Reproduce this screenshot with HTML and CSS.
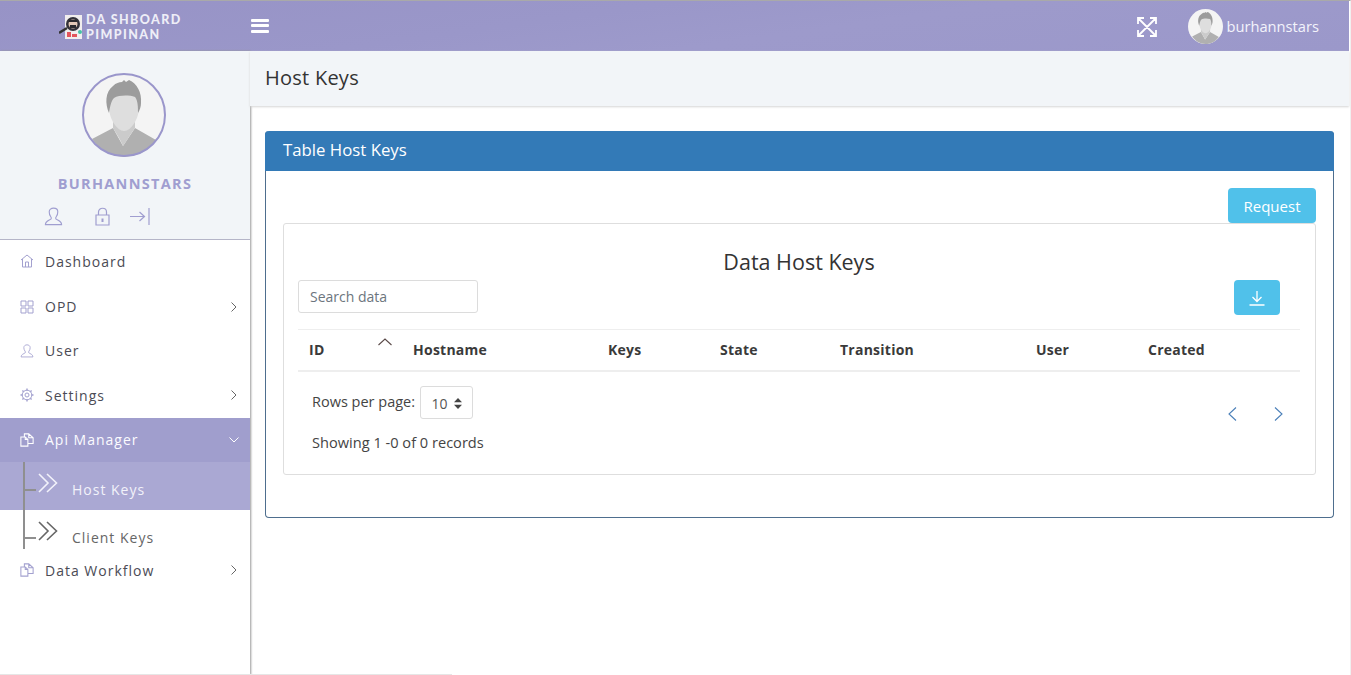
FILE: index.html
```html
<!DOCTYPE html>
<html lang="id">
<head>
<meta charset="utf-8">
<title>Host Keys</title>
<link rel="stylesheet" href="styles.css">
</head>
<body>
<svg class="defs" width="0" height="0" aria-hidden="true">
  <defs>
    <symbol id="person" viewBox="0 0 84 84">
      <circle cx="42" cy="42" r="42" fill="#f4f4f4"/>
      <path d="M10 66 L31 55 L41 73 L53 55 L74 67 C66 78 55 84 42 84 C29 84 18 77 10 66Z" fill="#b0b0b0"/>
      <path d="M31 44 H53 V55 C49 60 46 66 41 73 C38 66 34 60 31 55Z" fill="#cbcbcb"/>
      <path d="M27 34 C27 24 34 20 42 20 C50 20 57 24 57 34 C57 46 49 58 42 58 C35 58 27 46 27 34Z" fill="#dedede"/>
      <path d="M27 40 C23 31 23 19 31 13 C34 10 37 9 40 9 L42 7 L44 9 L47 7 C55 10 60 20 59 30 C59 33 58 37 56 40 C56 34 56 28 53 24 C47 22 37 22 32 25 C29 28 28 34 27 40Z" fill="#9c9c9c"/>
    </symbol>
    <symbol id="i-user" viewBox="0 0 20 20">
      <path d="M1.500 18.500 C1.500 14.500 6 14 7.500 12.500 C8 11.500 7.800 11 7 10 C5.800 8.500 5.500 6.500 5.500 5 C5.500 2.800 7.500 1.200 10 1.200 C12.500 1.200 14.500 2.800 14.500 5 C14.500 6.500 14.200 8.500 13 10 C12.200 11 12 11.500 12.500 12.500 C14 14 18.500 14.500 18.500 18.500Z" fill="none" stroke="currentColor" stroke-width="1.200"/>
    </symbol>
    <symbol id="i-copy" viewBox="0 0 16 16">
      <path d="M1 4.500 H6 L9 7.500 V15 H1Z M6 4.500 V7.500 H9 M5 4.500 V1 H10 L15 5.500 V12 H9 M10 1 V5.500 H15" fill="none" stroke="currentColor" stroke-width="1.200"/>
    </symbol>
    <symbol id="i-chev" viewBox="0 0 10 14">
      <path d="M2.500 2.500 L7 7 L2.500 11.500" fill="none" stroke="currentColor" stroke-width="1"/>
    </symbol>
    <symbol id="i-dbl" viewBox="0 0 20 20">
      <path d="M1 1 L10 10 L1 19 M9 1 L18.500 10 L9 19" fill="none" stroke="currentColor" stroke-width="1.600"/>
    </symbol>
  </defs>
</svg>

<div class="shell">
  <header class="topbar">
    <div class="brand">
      <svg class="brand-mark" width="25" height="26" viewBox="0 0 25 26" aria-hidden="true">
        <rect x="6" y="1" width="17" height="24" fill="#f1eeee"/>
        <circle cx="14" cy="10" r="7" fill="#33323a"/>
        <circle cx="14" cy="10" r="4.500" fill="#e3c9b8"/>
        <path d="M10 8 H18 V6 H10Z M11 14 H17 V11 H11Z" fill="#2a2a2e"/>
        <path d="M0 19 L8 14" stroke="#333" stroke-width="2.400"/>
        <path d="M8 23 V18 H12 V23Z M13 23 V20 H18 V23Z" fill="#e3555c"/>
        <circle cx="21" cy="18" r="2" fill="#45c2a5"/>
      </svg>
      <div class="brand-text"><span>DA SHBOARD</span><span>PIMPINAN</span></div>
    </div>
    <button class="burger" aria-label="Menu"><i></i><i></i><i></i></button>
    <div class="top-right">
      <svg class="expand" width="20" height="20" viewBox="0 0 20 20" aria-hidden="true">
        <path d="M2 2 L18 18 M18 2 L2 18 M1 7 V1 H7 M13 1 H19 V7 M19 13 V19 H13 M7 19 H1 V13" fill="none" stroke="#fff" stroke-width="1.800"/>
      </svg>
      <svg class="top-avatar" width="35" height="35" aria-hidden="true"><use href="#person"/></svg>
      <span class="top-name">burhannstars</span>
    </div>
  </header>

  <div class="body-row">
    <aside class="sidebar">
      <section class="profile">
        <svg class="avatar" width="84" height="84" aria-hidden="true"><use href="#person"/></svg>
        <div class="profile-name">BURHANNSTARS</div>
        <div class="profile-icons">
          <svg class="pi-user" width="19" height="19" aria-hidden="true"><use href="#i-user"/></svg>
          <svg class="pi-lock" width="15" height="19" viewBox="0 0 15 19" aria-hidden="true">
            <path d="M1 8 H14 V18 H1Z M3.500 8 V5 C3.500 0 11.500 0 11.500 5 V8" fill="none" stroke="currentColor" stroke-width="1.200"/>
            <rect x="6.500" y="11.500" width="2" height="3.500" fill="currentColor"/>
          </svg>
          <svg class="pi-exit" width="20" height="19" viewBox="0 0 20 19" aria-hidden="true">
            <path d="M0 9.500 H14 M9.500 5 L14.500 9.500 L9.500 14 M19 1 V18" fill="none" stroke="currentColor" stroke-width="1.200"/>
          </svg>
        </div>
      </section>
      <nav class="menu">
        <a class="item first">
          <svg class="ic" width="14" height="14" viewBox="0 0 14 14" aria-hidden="true"><path d="M1 6 L7 1 L13 6 M2.500 5 V13 H11.500 V5 M5.500 13 V8 H8.500 V13" fill="none" stroke="currentColor" stroke-width="1"/></svg>
          <span>Dashboard</span>
        </a>
        <a class="item">
          <svg class="ic" width="14" height="14" viewBox="0 0 14 14" aria-hidden="true"><path d="M1 1 H6 V6 H1Z M8 1 H13 V6 H8Z M1 8 H6 V13 H1Z M8 8 H13 V13 H8Z" fill="none" stroke="currentColor" stroke-width="1"/></svg>
          <span>OPD</span>
          <svg class="chev" width="10" height="14" aria-hidden="true"><use href="#i-chev"/></svg>
        </a>
        <a class="item">
          <svg class="ic" width="14" height="14" aria-hidden="true"><use href="#i-user"/></svg>
          <span>User</span>
        </a>
        <a class="item">
          <svg class="ic" width="14" height="14" viewBox="0 0 14 14" aria-hidden="true"><circle cx="7" cy="7" r="2" fill="none" stroke="currentColor"/><circle cx="7" cy="7" r="4.800" fill="none" stroke="currentColor"/><path d="M7 0.500 V2.500 M7 11.500 V13.500 M0.500 7 H2.500 M11.500 7 H13.500 M2.400 2.400 L3.700 3.700 M10.300 10.300 L11.600 11.600 M11.600 2.400 L10.300 3.700 M3.700 10.300 L2.400 11.600" stroke="currentColor" stroke-width="1.400"/></svg>
          <span>Settings</span>
          <svg class="chev" width="10" height="14" aria-hidden="true"><use href="#i-chev"/></svg>
        </a>
        <a class="item active">
          <svg class="ic" width="14" height="14" aria-hidden="true"><use href="#i-copy"/></svg>
          <span>Api Manager</span>
          <svg class="chev down" width="10" height="14" aria-hidden="true"><use href="#i-chev"/></svg>
        </a>
        <div class="submenu">
          <a class="sub current">
            <svg width="20" height="20" aria-hidden="true"><use href="#i-dbl"/></svg>
            <span>Host Keys</span>
          </a>
          <a class="sub">
            <svg width="20" height="20" aria-hidden="true"><use href="#i-dbl"/></svg>
            <span>Client Keys</span>
          </a>
        </div>
        <a class="item last">
          <svg class="ic" width="14" height="14" aria-hidden="true"><use href="#i-copy"/></svg>
          <span>Data Workflow</span>
          <svg class="chev" width="10" height="14" aria-hidden="true"><use href="#i-chev"/></svg>
        </a>
      </nav>
    </aside>

    <main class="main">
      <div class="page-title"><h1>Host Keys</h1></div>
      <div class="content">
        <section class="panel">
          <h2 class="panel-head">Table Host Keys</h2>
          <div class="panel-body">
            <div class="actions"><button class="btn-info">Request</button></div>
            <div class="inner">
              <h3 class="inner-title">Data Host Keys</h3>
              <div class="toolbar">
                <input class="search" type="text" placeholder="Search data">
                <button class="btn-dl" aria-label="Download">
                  <svg width="16" height="16" viewBox="0 0 16 16" aria-hidden="true"><path d="M8 1 V11 M3.500 7 L8 11.500 L12.500 7 M0.500 15 H15.500" fill="none" stroke="#fff" stroke-width="1.300"/></svg>
                </button>
              </div>
              <div class="thead">
                <div class="th th-id">ID
                  <svg class="sort" width="14" height="8" viewBox="0 0 14 8" aria-hidden="true"><path d="M0.500 7 L7 1 L13.500 7" fill="none" stroke="#5a4a48" stroke-width="1.100"/></svg>
                </div>
                <div class="th">Hostname</div>
                <div class="th">Keys</div>
                <div class="th">State</div>
                <div class="th">Transition</div>
                <div class="th">User</div>
                <div class="th">Created</div>
              </div>
              <div class="tfoot">
                <div class="foot-left">
                  <div class="rows">
                    <span class="rows-label">Rows per page:</span>
                    <div class="select"><span>10</span>
                      <svg width="8" height="11" viewBox="0 0 8 11" aria-hidden="true"><path d="M4 0 L8 4.300 H0Z M4 11 L0 6.700 H8Z" fill="#444"/></svg>
                    </div>
                  </div>
                  <div class="records">Showing 1 -0 of 0 records</div>
                </div>
                <div class="pager">
                  <svg width="9" height="14" viewBox="0 0 9 14" aria-hidden="true"><path d="M8 0.500 L1 7 L8 13.500" fill="none" stroke="#4a7fb8" stroke-width="1.100"/></svg>
                  <svg width="9" height="14" viewBox="0 0 9 14" aria-hidden="true"><path d="M1 0.500 L8 7 L1 13.500" fill="none" stroke="#4a7fb8" stroke-width="1.100"/></svg>
                </div>
              </div>
            </div>
          </div>
        </section>
      </div>
    </main>
  </div>
</div>
</body>
</html>
```
FILE: styles.css
```css
* { box-sizing: border-box; }
html, body { margin: 0; padding: 0; height: 100%; overflow: hidden; background: #fff; }
body { font-family: "Open Sans", "Liberation Sans", sans-serif; font-size: 14px; color: #333; border-top: 1px solid #a9a9a9; border-right: 1px solid #f0f0f0; position: relative; }
body::after { content: ""; position: absolute; left: 0; bottom: 0; width: 452px; height: 1px; background: #e6e6e6; z-index: 5; }
.defs { position: absolute; }
a { display: flex; }

.shell { width: 1349px; height: 674px; display: flex; flex-direction: column; }

.topbar {
  height: 50px; flex: none; display: flex; align-items: center; color: #fff;
  background: linear-gradient(172deg, #9793c6 0%, #9a97c9 40%, #9d9acb 60%, #9b98ca 100%);
}
.brand { width: 250px; flex: none; display: flex; align-items: center; padding-left: 59px; }
.brand-mark { flex: none; margin-right: 2px; margin-top: 2px; }
.brand-text { display: flex; flex-direction: column; font-family: "Lato", sans-serif; font-weight: 900; font-size: 12.500px; line-height: 15px; letter-spacing: 1.400px; color: #eeeef7; margin-top: 2px; white-space: nowrap; }
.brand-text span { display: block; height: 15px; }
.burger { width: 18px; height: 14px; padding: 0; margin: 0 0 1px 1px; border: 0; background: none; display: flex; flex-direction: column; justify-content: space-between; }
.burger i { display: block; height: 3px; background: #fff; border-radius: 1px; }
.top-right { margin-left: auto; display: flex; align-items: center; padding-right: 30px; }
.expand { margin-right: 31px; margin-top: 1px; }
.top-avatar { margin-right: 3px; margin-top: 1px; }
.top-name { font-size: 14.700px; color: #f3f3fb; }

.body-row { flex: 1; display: flex; min-height: 0; }

.sidebar { width: 250px; flex: none; background: #fff; box-shadow: 1px 0 2px #999; position: relative; z-index: 2; }
.profile { height: 189px; background: #f2f5f8; border-bottom: 1px solid #b5b5c8; display: flex; flex-direction: column; align-items: center; padding-top: 22px; }
.avatar { border-radius: 50%; outline: 2px solid #9a96cb; outline-offset: -2px; margin-right: 2px; flex: none; }
.profile-name { margin-top: 17px; font-weight: 700; font-size: 14.500px; line-height: 20px; letter-spacing: 1.300px; color: #a09ed0; }
.profile-icons { align-self: flex-start; display: flex; align-items: center; margin: 13px 0 0 44px; color: #a09ed0; }
.pi-lock { margin-left: 32px; }
.pi-exit { margin-left: 20px; }

.menu { display: flex; flex-direction: column; }
.item { height: 44.400px; display: flex; align-items: center; padding: 0 11px 0 20px; color: #4b4b55; letter-spacing: 1px; }
.item.first { padding-bottom: 2px; }
.item.last { margin-top: -1px; }
.item .ic { color: #a3a1cf; flex: none; margin-right: 11px; }
.item span { flex: 1; }
.chev { flex: none; color: #666; }
.down { transform: rotate(90deg); color: #fff; }
.active { background: #a09ecd; color: #fbfbff; }
.active .ic { color: #fff; }

.submenu { position: relative; height: 87px; display: flex; flex-direction: column; }
.submenu::before { content: ""; position: absolute; left: 23px; top: 0; height: 87px; width: 2px; background: #8f8f8f; z-index: 1; }
.sub { position: relative; height: 48px; flex: none; padding-left: 38px; color: #666; letter-spacing: 1px; }
.sub:last-child { height: 39px; }
.sub::before { content: ""; position: absolute; left: 25px; top: 27px; width: 11px; height: 2px; background: #8f8f8f; }
.sub svg { margin-top: 11px; flex: none; }
.sub span { margin: 18px 0 0 14px; line-height: 20px; }
.current { background: #aaa8d3; color: #f2f2fa; }

.main { flex: 1; min-width: 0; display: flex; flex-direction: column; }
.page-title { height: 55px; flex: none; background: #f2f5f8; box-shadow: 0 1px 2px #d5d5d5; padding: 0 15px; display: flex; align-items: center; position: relative; z-index: 3; }
.page-title h1 { margin: 0 0 3px; font-size: 20px; font-weight: 400; letter-spacing: 0.250px; color: #333; }
.content { padding: 25px 15px 0; }

.panel { border: 1px solid #4e6e8e; border-top: 0; border-radius: 4px; }
.panel-head { margin: 0 -1px; height: 40px; background: #337ab7; border-radius: 4px 4px 0 0; color: #fff; font-size: 16.800px; font-weight: 400; line-height: 38px; padding: 0 18px; }
.panel-body { padding: 17px 17px 42px; }
.actions { display: flex; justify-content: flex-end; }
.btn-info { width: 88px; height: 35px; border: 0; border-radius: 4px; background: #50c1ea; color: #fff; font: 400 15px "Open Sans", sans-serif; }

.inner { height: 252px; border: 1px solid #dedede; border-radius: 3px; padding: 0 15px 0 14px; }
.inner-title { margin: 24px 0 0; font-size: 21.500px; font-weight: 400; line-height: 27px; text-align: center; color: #333; }
.toolbar { display: flex; justify-content: space-between; align-items: flex-start; margin-top: 5px; }
.search { width: 180px; height: 33px; border: 1px solid #dcdcdc; border-radius: 3px; padding: 0 11px; font: 400 14px "Open Sans", sans-serif; color: #555; }
.search::placeholder { color: #6c757d; opacity: 1; }
.btn-dl { width: 46px; height: 35px; margin-right: 20px; border: 0; border-radius: 4px; background: #50c1ea; display: flex; align-items: center; justify-content: center; padding: 0; }

.thead { display: grid; grid-template-columns: 104px 195px 112px 120px 196px 112px 163px; height: 43px; margin-top: 14px; padding-bottom: 2px; border-top: 1px solid #eee; border-bottom: 2px solid #eee; align-items: center; font-weight: 700; letter-spacing: 0.250px; color: #3a3a3a; }
.th { padding-left: 11px; }
.th-id { position: relative; }
.sort { position: absolute; left: 80px; top: -2px; }

.tfoot { display: flex; justify-content: space-between; padding: 14px 0 0 14px; }
.rows { display: flex; align-items: center; height: 33px; font-size: 14.500px; }
.rows-label { margin-bottom: 3px; color: #444; }
.select { width: 53px; height: 33px; margin-left: 5px; border: 1px solid #dcdcdc; border-radius: 3px; display: flex; align-items: center; justify-content: center; gap: 6px; padding-top: 2px; color: #555; font-size: 14px; }
.records { margin-top: 13px; line-height: 20px; font-size: 14.600px; color: #444; }
.pager { display: flex; gap: 37px; padding: 21px 17px 0 0; }
```
